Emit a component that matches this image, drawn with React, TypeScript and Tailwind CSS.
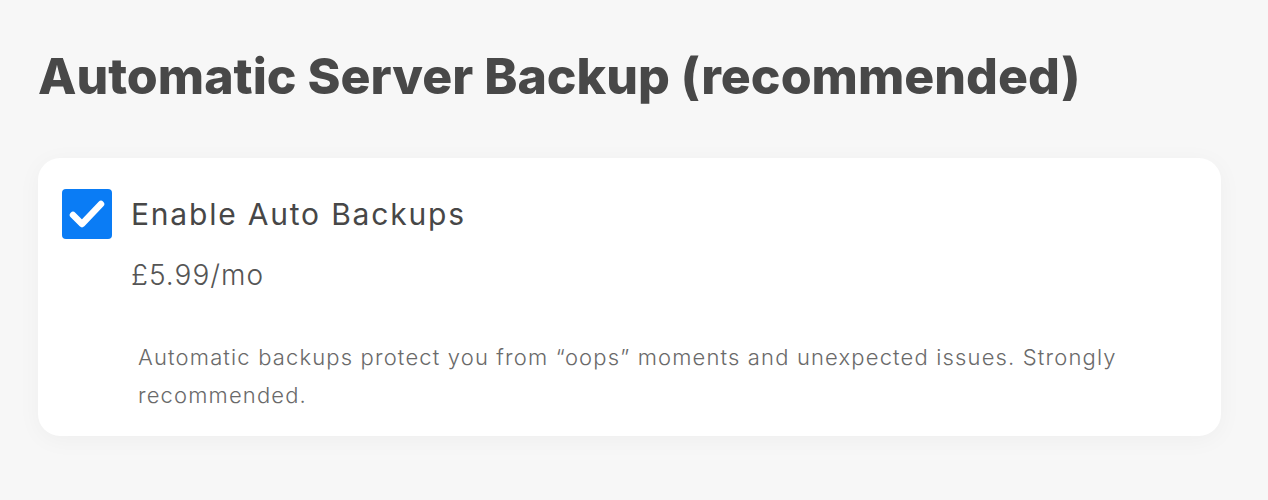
import React, { useState } from 'react';

const App = () => {
  const [enabled, setEnabled] = useState(true);

  return (
    <div className="min-h-screen bg-[#f7f7f7] px-[38px] pt-[45px] font-['Inter',sans-serif]">
      <h1 className="text-[50px] font-extrabold leading-[62px] text-[#484848]">
        Automatic Server Backup (recommended)
      </h1>

      <div className="mt-[51px] w-[1183px] bg-white rounded-[22px] shadow-[0_4px_24px_rgba(0,0,0,0.04)] px-6 pt-[31px] pb-[22px]">
        <label className="flex items-center gap-[19px] cursor-pointer">
          <button
            onClick={() => setEnabled(!enabled)}
            className={`w-[50px] h-[50px] rounded-[4px] flex items-center justify-center shrink-0 ${enabled ? 'bg-[#0a7cf5]' : 'bg-white border-2 border-gray-300'}`}
          >
            {enabled && (
              <svg width="36" height="30" viewBox="0 0 36 30">
                <path d="M4 16 L13 25 L32 5" fill="none" stroke="white" strokeWidth="6.5" strokeLinecap="round" strokeLinejoin="round" />
              </svg>
            )}
          </button>
          <span className="text-[30px] font-normal text-[#474747] tracking-[1.8px]">Enable Auto Backups</span>
        </label>

        <div className="pl-[69px] mt-[18px] text-[28px] font-light text-[#555] leading-[36px] tracking-[1px]">£5.99/mo</div>

        <p className="pl-[76px] mt-[45px] text-[22px] font-light text-[#6a6a6a] leading-[38px] tracking-[1.15px]">
          Automatic backups protect you from “oops” moments and unexpected issues. Strongly recommended.
        </p>
      </div>
    </div>
  );
};

export default App;
